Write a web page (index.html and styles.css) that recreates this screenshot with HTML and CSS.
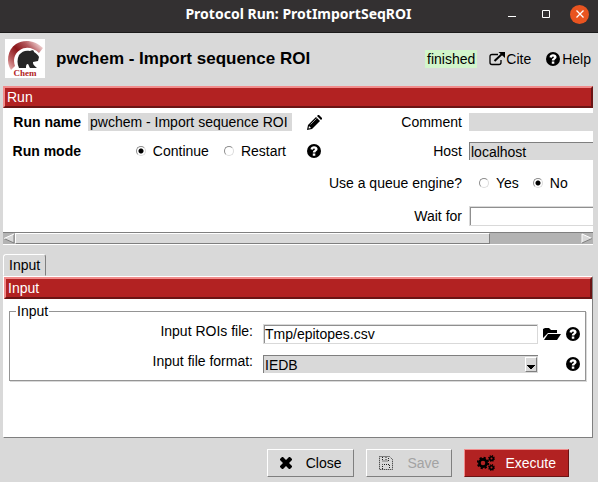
FILE: index.html
```html
<!DOCTYPE html>
<html lang="en">
<head>
<meta charset="utf-8">
<title>Protocol Run: ProtImportSeqROI</title>
<link rel="stylesheet" href="styles.css">
</head>
<body>
<svg class="defs" aria-hidden="true">
  <symbol id="help" viewBox="0 0 14 14">
    <circle cx="7" cy="7" r="7" fill="#000"/>
    <path d="M3.500 5.200C3.800 3 5.400 2.200 7 2.200c2 0 3.600 1.100 3.600 2.900C10.600 7 8.300 7.200 8.300 8.600H5.800C5.800 6.600 7.900 6.400 7.900 5.300 7.900 4.200 6.200 4.200 5.900 5.700zM5.800 9.500h2.500v2.200H5.800z" fill="#fff"/>
  </symbol>
</svg>
<header class="titlebar">
  <span></span>
  <h1>Protocol Run: ProtImportSeqROI</h1>
  <div class="wm">
    <button class="wm-btn" aria-label="Minimize"><svg width="8" height="5"><path d="M0 4h8v1H0z" fill="#fff"/></svg></button>
    <button class="wm-btn" aria-label="Maximize"><svg width="8" height="8"><path d="M.5.5h7v7h-7z" fill="none" stroke="#fff"/></svg></button>
    <button class="wm-btn wm-close" aria-label="Close window"><svg width="8" height="8"><path d="M.5.5l7 7M7.500.5l-7 7" stroke="#fff" stroke-width="1.300"/></svg></button>
  </div>
</header>
<main>
  <div class="head">
    <svg class="logo" width="40" height="39" viewBox="0 0 40 39" role="img" aria-label="Chem">
      <defs><linearGradient id="arc" x1="0" y1="1" x2="1" y2=".2"><stop offset="0" stop-color="#f0c4c4"/><stop offset=".25" stop-color="#b85a5c"/><stop offset=".5" stop-color="#8a1519"/><stop offset=".75" stop-color="#b2565a"/><stop offset="1" stop-color="#f3d8d8"/></linearGradient></defs>
      <path d="M0 0h40v39H0z" fill="#fff"/>
      <path d="M6 31C1 24 2 11 11 5c8-5 19-4 27 4l-4 5C29 9 21 7 15 11c-6 4-7 10-5 16z" fill="url(#arc)"/>
      <path d="M14 29c-2-4-2-9 0-13 3-4 7-5 11-4 2-1 4-1 4 1 2 1 4 3 5 5l-1 4-5 1 0 1c0 2 2 3 4 5l-7 0c-1-1-1-3-2-4-2 0-2 2-2 4h-7z" fill="#262626"/>
      <text x="20" y="37" text-anchor="middle" class="logo-text">Chem</text>
    </svg>
    <h2>pwchem - Import sequence ROI</h2>
    <span class="status">finished</span>
    <a class="link" href="#cite"><svg width="16" height="14" viewBox="0 0 16 14"><path d="M9 2.500H3Q1 2.500 1 4.500v6q0 2 2 2h7q2 0 2-2V8" fill="none" stroke="#000" stroke-width="1.300"/><path d="M5.500 9L13 2" stroke="#000" stroke-width="2"/><path d="M9.500 0H16v6z"/></svg>Cite</a>
    <a class="link link-help" href="#help-page"><svg width="14" height="14"><use href="#help"/></svg>Help</a>
  </div>

  <section class="run">
    <h3 class="bar">Run</h3>
    <div class="run-grid">
      <label class="strong" for="name">Run name</label>
      <input class="flat" id="name" value="pwchem - Import sequence ROI" readonly>
      <button class="icon" aria-label="Edit"><svg width="15" height="15" viewBox="0 0 15 15"><path d="M0 15l1-5L9 2l4 4-8 8z"/><path d="M10 1l1-1h1l3 3v1l-1 1z"/><path d="M1.500 13.500l.5-2.500 2 2z" fill="#fff"/><path d="M3.500 9.500l6-6" stroke="#fff" stroke-width=".6"/></svg></button>
      <label for="comment">Comment</label>
      <input class="flat" id="comment">

      <span class="strong">Run mode</span>
      <div class="radios mode">
        <label><input type="radio" name="mode" checked>Continue</label>
        <label><input type="radio" name="mode">Restart</label>
      </div>
      <button class="icon" aria-label="Run mode help"><svg width="14" height="14"><use href="#help"/></svg></button>
      <label for="host">Host</label>
      <select class="combo open-end" id="host"><option>localhost</option></select>

      <span class="queue-label">Use a queue engine?</span>
      <div class="radios queue">
        <label><input type="radio" name="queue">Yes</label>
        <label><input type="radio" name="queue" checked>No</label>
      </div>

      <label class="queue-label" for="wait">Wait for</label>
      <input class="entry open-end" id="wait">
    </div>
    <div class="scroll" aria-hidden="true">
      <svg width="12" height="11"><path d="M0 0h12v11H0z" fill="#b3b3b3"/><path d="M1 5.500L11 1v9z" fill="#d9d9d9"/><path d="M11 1v9L1 5.500" fill="none" stroke="#7f7f7f"/><path d="M1 5.500L11 1" stroke="#fff"/></svg>
      <div class="thumb"></div><div class="trough"></div>
      <svg width="12" height="11"><path d="M1 1l10 4.500L1 10z" fill="#d9d9d9"/><path d="M1 10V1l10 4.500" fill="none" stroke="#fff"/><path d="M1 10l10-4.500" stroke="#7f7f7f"/></svg>
    </div>
  </section>

  <div class="tabs" role="tablist"><button class="tab" role="tab" aria-selected="true">Input</button></div>
  <section class="pane">
    <h3 class="bar">Input</h3>
    <fieldset>
      <legend>Input</legend>
      <div class="param">
        <label for="file">Input ROIs file:</label>
        <input class="entry" id="file" value="Tmp/epitopes.csv">
        <button class="icon" aria-label="Browse"><svg width="18" height="14" viewBox="0 0 18 14"><path d="M0 11V2l2-1h4l2 2h6v3H5z"/><path d="M1 13l4-6h13l-4 6z"/></svg></button>
        <button class="icon" aria-label="File help"><svg width="14" height="14"><use href="#help"/></svg></button>
      </div>
      <div class="param">
        <label for="format">Input file format:</label>
        <div class="combo-box"><select class="combo" id="format"><option>IEDB</option></select><svg class="arrow" width="12" height="15" viewBox="0 0 10 13"><path d="M1 7h8v1H8v1H7v1H6v1H4v-1H3V9H2V8H1z"/></svg></div>
        <span></span>
        <button class="icon" aria-label="Format help"><svg width="14" height="14"><use href="#help"/></svg></button>
      </div>
    </fieldset>
  </section>

  <footer>
    <button class="btn"><svg width="12" height="12" viewBox="0 0 12 12"><path d="M0 2l2-2h1l3 3 3-3h1l2 2v1L9 6l3 3v1l-2 2H9L6 9l-3 3H2l-2-2V9l3-3-3-3z"/></svg>Close</button>
    <button class="btn" disabled><svg width="14" height="14"><path d="M.5.500h10l3 3v10H.5zM3.500 1v4h6V1M3.500 13V8.500h7V13M7 1v3" fill="none" stroke="#222" stroke-dasharray="1 1"/></svg>Save</button>
    <button class="btn primary"><svg width="18" height="16" viewBox="0 0 18 16"><circle cx="6" cy="8" r="3.600" fill="none" stroke="#000" stroke-width="2.600"/><circle cx="6" cy="8" r="5.300" fill="none" stroke="#000" stroke-width="1.800" stroke-dasharray="2.200 1.960"/><circle cx="14.500" cy="3.500" r="1.800" fill="none" stroke="#000" stroke-width="1.600"/><circle cx="14.500" cy="3.500" r="2.800" fill="none" stroke="#000" stroke-width="1.200" stroke-dasharray="1.200 1"/><circle cx="14.500" cy="12.500" r="1.800" fill="none" stroke="#000" stroke-width="1.600"/><circle cx="14.500" cy="12.500" r="2.800" fill="none" stroke="#000" stroke-width="1.200" stroke-dasharray="1.200 1"/></svg>Execute</button>
  </footer>
</main>
</body>
</html>
```
FILE: styles.css
```css
* { box-sizing: border-box; }
body {
  margin: 0;
  min-height: 100vh;
  background: #d9d9d9;
  color: #000;
  font: 14px/18px "Liberation Sans", Arial, sans-serif;
}
button, input, select {
  margin: 0;
  padding: 0;
  border: 0;
  border-radius: 0;
  background: none;
  color: inherit;
  font: inherit;
}
h1, h2, h3 { margin: 0; font: inherit; }
svg { display: block; flex: none; }
.defs { display: none; }

.titlebar {
  display: grid;
  grid-template-columns: 1fr auto 1fr;
  align-items: center;
  height: 33px;
  padding: 0 9px 4px 8px;
  border-bottom: 1px solid #1c1b1b;
  background: #333031;
  color: #fff;
}
.titlebar h1 { font: bold 14px/20px "Noto Sans", "Open Sans", sans-serif; }
.wm { display: flex; justify-content: flex-end; gap: 15px; align-items: center; }
.wm-btn { display: grid; place-items: center; width: 19px; height: 19px; }
.wm-close { border-radius: 50%; background: #e95420; }

.head { display: flex; align-items: center; height: 53px; padding: 0 7px 2px 5px; }
.logo-text { font: bold 9px "Liberation Serif", serif; fill: #b22222; }
.head h2 { flex: 1; padding-left: 11px; font-size: 17px; font-weight: bold; white-space: nowrap; }
.status { margin-right: 12px; padding: 0 2px; background: #d2f5cb; }
.link { display: flex; align-items: center; gap: 1px; color: inherit; text-decoration: none; }
.link-help { margin-left: 15px; gap: 2px; }

.bar {
  height: 22px;
  padding-left: 2px;
  border: 2px solid;
  border-color: #f18c8c #6b1414 #6b1414 #f18c8c;
  background: #b22222;
  color: #fff;
}

.run { margin: 0 5px 0 3px; background: #fff; overflow: hidden; }
.run-grid {
  display: grid;
  grid-template-columns: 78px 204px 30px 1fr 124px;
  grid-template-rows: 28px 30px 34px 32px;
  column-gap: 7px;
  align-items: center;
}
.run-grid > label, .run-grid > span { text-align: right; white-space: nowrap; }
.strong { font-weight: bold; }
.icon { display: grid; place-items: center; }
.flat { width: 100%; height: 18px; padding-left: 2px; background: #d9d9d9; }
.queue-label { grid-column: 1 / 5; }
.radios { display: flex; }
.radios label { display: flex; align-items: center; gap: 7px; }
.mode { justify-content: flex-end; gap: 15px; padding-right: 6px; }
.queue { gap: 14px; padding-left: 10px; }
input[type="radio"] {
  appearance: none;
  width: 10px;
  height: 10px;
  border: 1px solid;
  border-color: #8c8c8c #dcdcdc #dcdcdc #8c8c8c;
  border-radius: 50%;
  background: #fff;
}
input[type="radio"]:checked { background: radial-gradient(circle, #000 2px, #fff 3px); }

.entry {
  width: 100%;
  height: 20px;
  padding-left: 1px;
  border: 1px solid #d9d9d9;
  background: #fff;
  box-shadow: inset 1px 1px #8f8f8f;
}
.combo {
  display: block;
  appearance: none;
  width: 100%;
  height: 18px;
  padding-left: 1px;
  border: solid #7f7f7f;
  border-width: 1px 0 0 1px;
  background: #d9d9d9;
}
.open-end { border-right: 0; }
.combo-box { position: relative; }
.arrow {
  position: absolute;
  right: 1px;
  top: 2px;
  border: 1px solid;
  border-color: #fff #7f7f7f #7f7f7f #fff;
  background: #d9d9d9;
  pointer-events: none;
}

.scroll {
  display: flex;
  border-top: 1px solid #7f7f7f;
  border-bottom: 1px solid #fff;
  background: #b3b3b3;
}
.thumb {
  flex: 475;
  border: 1px solid;
  border-color: #fff #7f7f7f #7f7f7f #fff;
  background: #d9d9d9;
}
.trough { flex: 91; }

.tabs { display: flex; margin: 9px 5px 0 3px; }
.tab {
  height: 22px;
  padding: 0 5px;
  border: 1px solid;
  border-color: #fff #7f7f7f transparent #fff;
  border-radius: 3px 3px 0 0;
}
.pane {
  min-height: 162px;
  margin: 0 5px 0 3px;
  border: 1px solid;
  border-color: #fff #7f7f7f #7f7f7f #fff;
  background: #fff;
}
fieldset {
  margin: 4px 6px 0 5px;
  padding: 0 5px 1px;
  border: 1px solid #949494;
  box-shadow: 1px 1px #d9d9d9;
}
legend { padding: 0 1px; margin-left: 1px; line-height: 16px; }
.param {
  display: grid;
  grid-template-columns: 243px 1fr 18px 14px;
  column-gap: 5px;
  align-items: center;
  height: 30px;
}
.param label { padding: 0 5px 6px 0; text-align: right; }

footer { display: flex; justify-content: flex-end; gap: 12px; padding: 11px 29px 5px 5px; }
.btn {
  display: flex;
  align-items: center;
  gap: 14px;
  height: 28px;
  padding: 0 12px;
  border: 1px solid;
  border-color: #fff #7f7f7f #7f7f7f #fff;
}
.btn:disabled { color: #a3a3a3; }
.primary { gap: 10px; background: #b22222; border-color: #f18c8c #6b1414 #6b1414 #f18c8c; color: #fff; }
```
